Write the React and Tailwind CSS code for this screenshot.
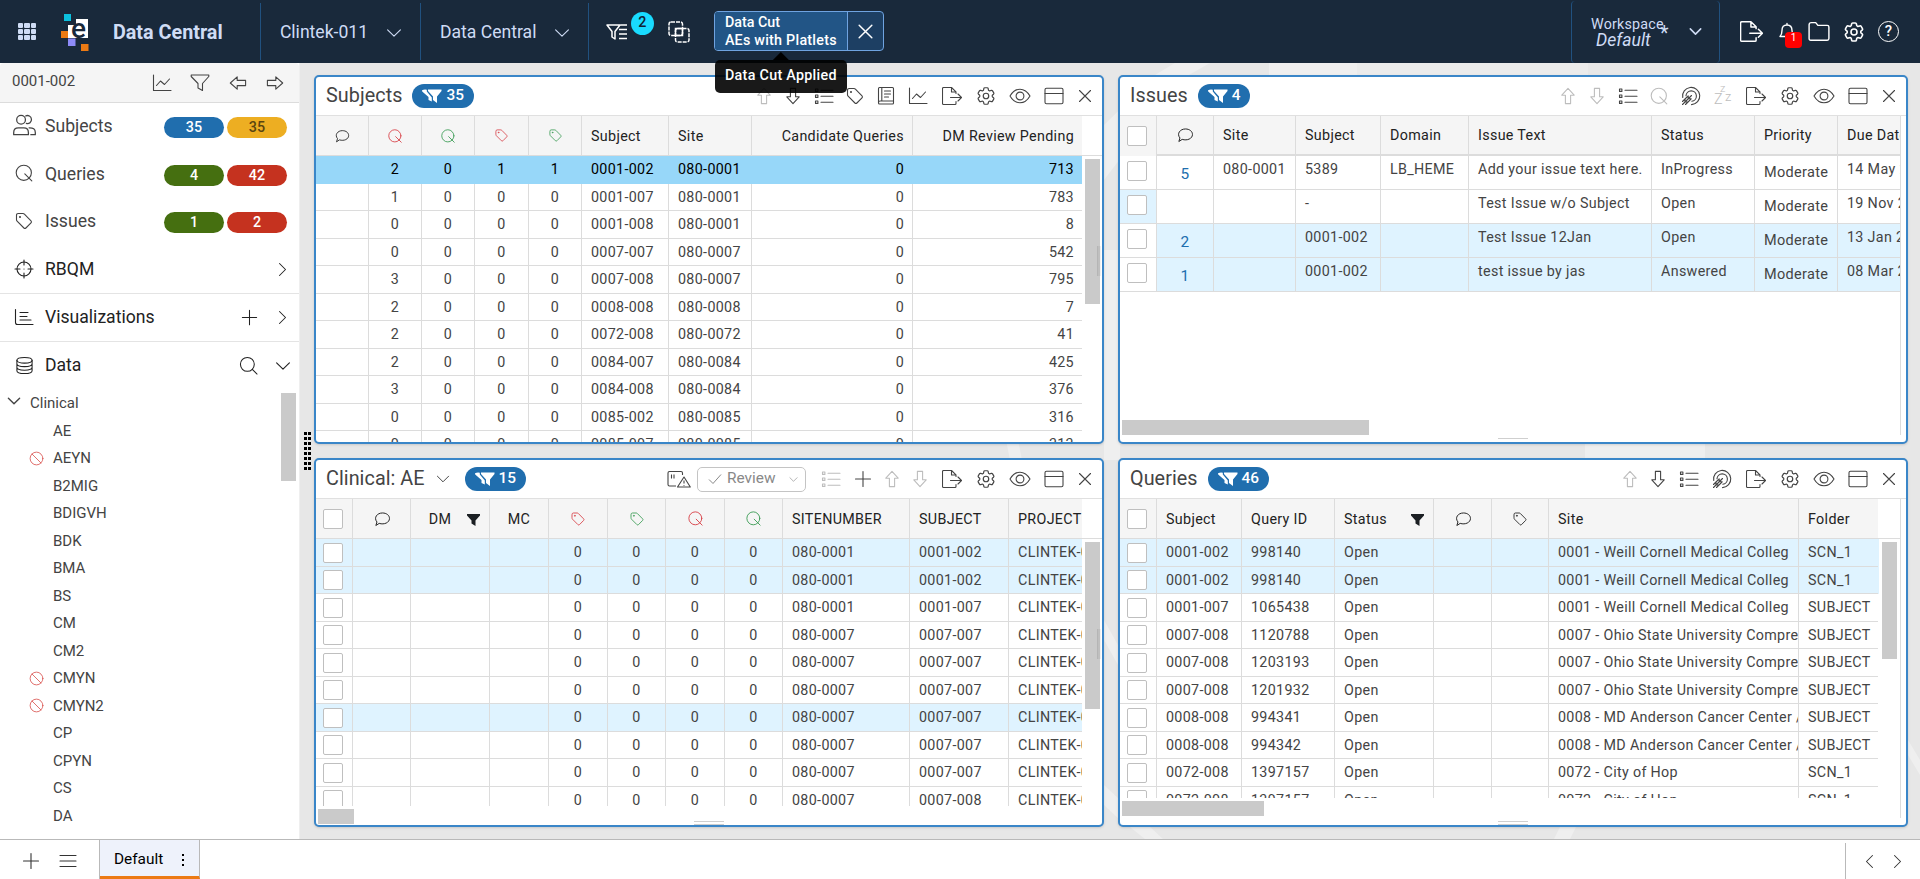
import clsx from "clsx";
import { HiOutlineCog6Tooth } from "react-icons/hi2";

/* ---------- icons ---------- */

function Svg({ size = 20, sw = 1.1, className, children }) {
    return (
        <svg
            width={size}
            height={size}
            viewBox="0 0 20 20"
            fill="none"
            stroke="currentColor"
            strokeWidth={sw}
            strokeLinecap="round"
            strokeLinejoin="round"
            className={clsx("shrink-0", className)}
        >
            {children}
        </svg>
    );
}

const ArrowUp = (p) => (
    <Svg {...p}>
        <path d="M10 2.3 16.2 9.2H12.6V17.6H7.4V9.2H3.8Z" />
    </Svg>
);
const ArrowDown = (p) => <ArrowUp {...p} className="rotate-180" />;
const ArrowLeft = (p) => <ArrowUp {...p} className="-rotate-90" />;
const ArrowRight = (p) => <ArrowUp {...p} className="rotate-90" />;
const List = (p) => (
    <Svg {...p}>
        <path d="M1.5 3h2.4v2.4H1.5zM1.5 9h2.4v2.4H1.5zM1.5 15h2.4v2.4H1.5zM7 4.2h12M7 10.2h12M7 16.2h12" />
    </Svg>
);
const Tag = (p) => (
    <Svg {...p}>
        <path d="M2.5 4.2Q2.5 2.5 4.2 2.5H9Q9.8 2.5 10.4 3.1L17 9.8Q18 10.8 17 11.8L11.9 17Q10.9 18 9.9 17L3.1 10.2Q2.5 9.6 2.5 8.8Z" />
        <circle cx="6" cy="6" r=".5" />
    </Svg>
);
const Book = (p) => (
    <Svg {...p}>
        <rect x="2.5" y="1.5" width="15" height="16.5" rx="1" />
        <path d="M5.8 1.5v13.5M8.5 5h6M8.5 8h6M8.5 11h4M2.5 16.5q0-1.5 1.5-1.5h13.5" />
    </Svg>
);
const Chart = (p) => (
    <Svg {...p}>
        <path d="M1.5 2v15.5h17.5M4.5 12.5 8.5 8l4 3.5 5-5.5" />
    </Svg>
);
const Export = (p) => (
    <Svg {...p}>
        <path d="M14 7.5V5.8L9.5 1.5H1.5Q.5 1.5.5 2.5V17.5Q.5 18.5 1.5 18.5H13Q14 18.5 14 17.5V15.5M9.5 1.5V6H14M8.5 11.5H19.5M16 8 19.5 11.5 16 15" />
    </Svg>
);
const Gear = ({ size = 20, sw = 1.3 }) => (
    <HiOutlineCog6Tooth size={size + 2} strokeWidth={sw} className="shrink-0" />
);
const Eye = (p) => (
    <Svg {...p} className="overflow-visible">
        <path d="M0 10Q4 3.2 10 3.2T20 10Q16 16.8 10 16.8T0 10Z" />
        <circle cx="10" cy="10" r="3.9" />
    </Svg>
);
const Pane = (p) => (
    <Svg {...p}>
        <rect x="1" y="2.2" width="18" height="15.6" rx="1.5" />
        <path d="M1 7.5H19" />
    </Svg>
);
const Close = (p) => (
    <Svg {...p}>
        <path d="M4.5 4.5 15.5 15.5M15.5 4.5 4.5 15.5" />
    </Svg>
);
const Query = (p) => (
    <Svg {...p}>
        <circle cx="9.8" cy="9.8" r="7.6" />
        <path d="M10.8 10.8 17.8 17.8" />
    </Svg>
);
const Target = (p) => (
    <Svg {...p}>
        <path d="M1.7 11.5A8.6 8.6 0 1 1 10.5 18.6M5 9.8A5.2 5.2 0 1 1 10.8 15.2M1.5 18.5 10.5 9.5M4 13V16H7M4 13 7.2 9.8V12.8H10.2L7 16M1.5 15.5 4 13M4.500 18.500 7 16" />
    </Svg>
);
const Snooze = () => (
    <span className="relative block h-5 w-5 shrink-0 font-light leading-none tracking-normal">
        <span className="absolute left-[7px] top-[-3px] text-[11px]">z</span>
        <span className="absolute left-[1px] top-[6px] text-[14.3px]">Z</span>
        <span className="absolute left-[12px] top-[4px] text-[13px]">z</span>
    </span>
);
const Plus = (p) => (
    <Svg {...p}>
        <path d="M10 2.5V17.5M2.5 10H17.5" />
    </Svg>
);
const Comment = (p) => (
    <Svg {...p}>
        <path d="M3.3 16.8 4.4 13.3C.5 8.5 4.5 3.3 10.5 3.3C15 3.3 18.3 5.9 18.3 9.4C18.3 14 12.5 16.6 7.3 15Z" />
    </Svg>
);
const Funnel = (p) => (
    <Svg {...p}>
        <path d="M1.2 2H18.8V3.5L12.5 10.5V17.5L8 15V10.5L1.2 3.5Z" />
    </Svg>
);
const FunnelSolid = () => (
    <svg width="13" height="12" viewBox="0 0 13 12" fill="#1b1f23">
        <path d="M0 0H13V1.5L8.5 6.5V12L4.5 9.5V6.5L0 1.5Z" />
    </svg>
);
const Funnels = () => (
    <svg width="20" height="14" viewBox="0 0 20 14" fill="#fff">
        <path d="M6 .5H19.5V2L15 7.5V14L11 11V7.5L6 2Z" />
        <path d="M0 1.2Q2.5.2 4.8.8V2.5L9.8 8.5V12.5L6.5 11V8L.2 2.5Z" />
    </svg>
);
const Chevron = ({ size = 16, sw = 1.4, className }) => (
    <Svg size={size} sw={sw} className={className}>
        <path d="M2 6 10 14 18 6" />
    </Svg>
);
const People = (p) => (
    <Svg {...p}>
        <circle cx="7" cy="5" r="3.8" />
        <path d="M.6 18v-1.8Q.6 12 4.6 12H9.4Q13.4 12 13.4 16.2V18ZM11 1.7A3.5 3.5 0 1 1 11.6 8.2M14 12Q19.4 11.8 19.4 16V18H15.5" />
    </Svg>
);
const Crosshair = (p) => (
    <Svg {...p}>
        <circle cx="10" cy="10" r="7" />
        <path d="M10 1v5M10 14v5M1 10h5M14 10h5M10 10h.01" />
    </Svg>
);
const Bars = (p) => (
    <Svg {...p}>
        <path d="M1.5 2.5V15.5Q1.5 17.5 3.5 17.5H19M6 5.5h8M6 9.5h7M6 13h11" />
    </Svg>
);
const Database = (p) => (
    <Svg {...p}>
        <ellipse cx="10" cy="4.5" rx="8" ry="3" />
        <path d="M2 4.5V15.5C2 17.3 5.5 18.5 10 18.5S18 17.3 18 15.5V4.5M2 8.2C2 10 5.5 11.2 10 11.2S18 10 18 8.2M2 11.9C2 13.7 5.5 14.9 10 14.9S18 13.7 18 11.9" />
    </Svg>
);
const Search = (p) => (
    <Svg {...p}>
        <circle cx="8.8" cy="8.8" r="7.3" />
        <path d="M14 14 19 19" />
    </Svg>
);
const Ban = (p) => (
    <Svg {...p}>
        <circle cx="10" cy="10" r="8.5" />
        <path d="M4 4 16 16" />
    </Svg>
);
const DataAlert = () => (
    <svg width="24" height="20" viewBox="0 0 24 20" fill="none" stroke="currentColor" strokeWidth="1.1" strokeLinejoin="round">
        <path d="M9 17H2.5Q1 17 1 15.5V4Q1 2.5 2.5 2.5H14Q15.5 2.5 15.5 4V6M4.5 5.5V9.5M7 5.5V9.5M17 8 23.3 18H10.5ZM17 11.5V14.5M17 16V16.8" />
    </svg>
);

/* ---------- header ---------- */

function Logo() {
    return (
        <svg width="29" height="40" viewBox="0 0 29 40" className="ml-6">
            <rect x="4" y="2" width="7" height="7" fill="#0cc0de" />
            <path d="M16 7H28V26H8V13H16Z" fill="#fff" />
            <rect x="1" y="19" width="7" height="7" fill="#ec7a14" />
            <rect x="8" y="26.5" width="7.5" height="7.5" fill="#8e8bf8" />
            <rect x="21" y="32" width="7.5" height="7" fill="#ec7a14" />
            <text x="11" y="25.5" fontSize="28" fontWeight="500" fill="#19293b">
                e
            </text>
        </svg>
    );
}

function HeaderSelect({ label, width }) {
    return (
        <div className={clsx("flex h-[57px] items-center border-l border-[#21517f] pl-[19px] pt-[2px]", width)}>
            <span className="text-[17.6px] text-[#cfdcf5]">{label}</span>
            <Chevron className="ml-[18px] text-[#cfdcf5]" />
        </div>
    );
}

function Header() {
    return (
        <header className="flex h-[63px] items-center bg-[#19293b] text-white">
            <div className="ml-[18px] grid grid-cols-3 gap-px">
                {Array.from({ length: 9 }).map((_, i) => (
                    <span key={i} className="h-[5.3px] w-[5.3px] rounded-[1px] bg-[#cfdcf5]" />
                ))}
            </div>
            <Logo />
            <div className="ml-6 w-[147px] whitespace-nowrap pt-[2px] text-[19.8px] font-bold text-[#cfdcf5]">Data Central</div>
            <HeaderSelect label="Clintek-011" width="w-[160px]" />
            <HeaderSelect label="Data Central" width="w-[168px]" />
            <div className="flex h-[57px] items-center border-l border-[#21517f] pl-[17px]">
                <div className="relative">
                    <svg width="22" height="18" viewBox="0 0 22 18" fill="none" stroke="#fff" strokeWidth="1.5" strokeLinejoin="round">
                        <path d="M1 2H14L9 8.5V16L6 14V8.5ZM14.5 2H21M13 6.5H21M13 11H21M13 15.5H21" />
                    </svg>
                    <span className="absolute left-[25px] top-[-11px] flex h-[23px] w-[23px] items-center justify-center rounded-full bg-[#19dbff] text-[14.3px] font-medium text-[#123]">
                        2
                    </span>
                </div>
                <svg className="ml-10" width="22" height="22" viewBox="0 0 22 22" fill="none" stroke="#fff" strokeWidth="1.5">
                    <rect x="1" y="1" width="13.5" height="13.5" rx="2" strokeDasharray="4 1" />
                    <rect x="7.5" y="7.5" width="13.5" height="13.5" rx="2" strokeDasharray="4 1" />
                    <path d="M7.5 14.5V7.5H14.5V14.5Z" />
                </svg>
            </div>
            <div className="relative ml-6 mt-[-1px] flex h-10 w-[170px] rounded-[4px] border border-[#6fa3e0] bg-[#1d3f63]">
                <div className="flex w-[133px] flex-col justify-center whitespace-nowrap rounded-l-[3px] border-r border-[#6fa3e0] bg-[#225586] pl-[10px] text-[14.3px] font-medium leading-[18px]">
                    <span>Data Cut</span>
                    <span className="tracking-[0.25px]">AEs with Platlets</span>
                </div>
                <div className="flex flex-1 items-center justify-center">
                    <Close size={23} sw={1.3} />
                </div>
                <div className="absolute left-0 top-[40px] z-20 flex w-[132px] flex-col items-center">
                    <div className="h-[8px] w-[16px] bg-black [clip-path:polygon(50%_0,100%_100%,0_100%)]" />
                    <div className="flex h-[33px] w-full items-center justify-center whitespace-nowrap rounded-[5px] bg-black/90 pb-[2px] text-[14.3px] font-medium tracking-[0.3px]">
                        Data Cut Applied
                    </div>
                </div>
            </div>
            <div className="ml-auto flex h-[62px] w-[149px] items-center rounded border-x border-[#21517f] pl-[19px] text-[#cfdcf5]">
                <div className="relative leading-4">
                    <div className="text-[14.3px] tracking-[0.2px]">Workspace</div>
                    <div className="pr-2 text-center text-[17.6px] italic">Default</div>
                    <span className="absolute left-[69px] top-[10px] text-[19.8px]">*</span>
                </div>
                <Chevron size={13} sw={2.4} className="ml-[25px]" />
            </div>
            <div className="ml-[20px] mr-[21px] flex items-center">
                <Export size={23} sw={1.3} />
                <div className="relative ml-[14px]">
                    <Svg size={20} sw={1.4}>
                        <path d="M3 14.5Q5 12.5 5 8.5Q5 3 10 3T15 8.5Q15 12.5 17 14.5ZM10 1.5V3" />
                    </Svg>
                    <span className="absolute left-[8px] top-[10px] flex h-4 w-[17px] items-center justify-center rounded bg-[#f00] pb-[3px] text-[10px] leading-none">
                        1
                    </span>
                </div>
                <Svg size={22} sw={1.3} className="ml-[11px]">
                    <path d="M1 3.5Q1 1.5 3 1.5H7L9 4H17.5Q19 4 19 5.5V16Q19 17.5 17.5 17.5H2.5Q1 17.5 1 16Z" />
                </Svg>
                <div className="ml-[12px]">
                    <Gear size={22} sw={1.6} />
                </div>
                <div className="relative ml-[12px] flex h-[21px] w-[21px] items-center justify-center rounded-full border-[1.5px] border-white text-[15px] font-medium">
                    ?
                </div>
            </div>
        </header>
    );
}

/* ---------- sidebar ---------- */

const menu = [
    { label: "Subjects", icon: <People size={23} />, pills: [["35", "bg-[#206eae] text-white"], ["35", "bg-[#edae22] text-[#5a4410]"]] },
    { label: "Queries", icon: <Query size={20} />, pills: [["4", "bg-[#456f10] text-white"], ["42", "bg-[#c5321f] text-white"]] },
    { label: "Issues", icon: <Tag size={20} />, pills: [["1", "bg-[#456f10] text-white"], ["2", "bg-[#c5321f] text-white"]] },
];

const domains = ["AE", "AEYN", "B2MIG", "BDIGVH", "BDK", "BMA", "BS", "CM", "CM2", "CMYN", "CMYN2", "CP", "CPYN", "CS", "DA"];
const blocked = ["AEYN", "CMYN", "CMYN2"];

function Sidebar() {
    return (
        <aside className="relative flex w-[300px] shrink-0 flex-col overflow-hidden border-r border-[#efefef] bg-white">
            <div className="flex h-[40px] items-center rounded-t border-b border-[#dcdcdc] bg-[#f5f5f5] pl-[12px] pr-[14px] text-[#444]">
                <span className="pb-[3px] text-[15px]">0001-002</span>
                <div className="ml-auto flex items-center">
                    <Chart />
                    <Funnel className="ml-[18px]" />
                    <span className="ml-[18px]"><ArrowLeft /></span>
                    <span className="ml-[17px]"><ArrowRight /></span>
                </div>
            </div>
            <div className="border-b border-[#e4e4e4]">
                {menu.map((m) => (
                    <div key={m.label} className="flex h-[47.5px] items-center pr-[12px] text-[#444]">
                        <div className="flex w-[45px] justify-center pb-[2px] pl-[3px]">{m.icon}</div>
                        <span className="pb-px text-[17.6px]">{m.label}</span>
                        <div className="ml-auto flex gap-[3px] pt-[2px]">
                            {m.pills.map(([n, cls]) => (
                                <span key={cls} className={clsx("flex h-[21px] w-[60px] items-center justify-center rounded-full text-[14.3px] font-medium", cls)}>
                                    {n}
                                </span>
                            ))}
                        </div>
                    </div>
                ))}
                <div className="flex h-[47px] items-center pr-[9px] text-[#222]">
                    <div className="flex w-[45px] justify-center pl-[3px]"><Crosshair /></div>
                    <span className="text-[17.6px]">RBQM</span>
                    <Chevron className="ml-auto -rotate-90" size={15} />
                </div>
            </div>
            <div className="flex h-[48px] items-center border-b border-[#e4e4e4] pr-[9px] text-[#222]">
                <div className="flex w-[45px] justify-center pl-[3px]"><Bars /></div>
                <span className="text-[17.6px]">Visualizations</span>
                <span className="ml-auto"><Plus size={19} /></span>
                <Chevron className="ml-[16px] -rotate-90" size={15} />
            </div>
            <div className="flex h-[48px] items-center pr-[8px] text-[#222]">
                <div className="flex w-[45px] justify-center pl-[3px]"><Database size={19} /></div>
                <span className="text-[17.6px]">Data</span>
                <span className="ml-auto"><Search size={19} /></span>
                <Chevron className="ml-[17px]" size={16} />
            </div>
            <div className="flex text-[15px] text-[#444]">
                <div className="flex-1">
                    <div className="flex h-[27.5px] items-center pl-[7px]">
                        <Chevron size={14} sw={2} className="mb-1" />
                        <span className="ml-[9px]">Clinical</span>
                    </div>
                    {domains.map((d) => (
                        <div key={d} className="flex h-[27.5px] items-center">
                            <div className="w-[53px] pl-[29px] text-[#d9534f]">{blocked.includes(d) && <Ban size={15} />}</div>
                            {d}
                        </div>
                    ))}
                </div>
                <div className="mr-[3px] mt-[3px] h-[88px] w-[15px] bg-[#cacaca]" />
            </div>
        </aside>
    );
}

/* ---------- panels ---------- */

function Toolbar({ items, children }) {
    return (
        <div className="ml-auto flex items-center pr-[6px] text-[#444]">
            {children}
            {items.map(([Icon, gap, faded], i) => (
                <span key={i} className={clsx("flex w-[22px] justify-center", gap, faded && "text-[#bdbdbd]")}>
                    <Icon />
                </span>
            ))}
        </div>
    );
}

const common = [
    [Gear, "ml-[12px]"],
    [Eye, "ml-[12px]"],
    [Pane, "ml-[12px]"],
    [Close, "ml-[9px]"],
];

function Panel({ title, count, chevron, items, extra, children }) {
    return (
        <section className="relative flex flex-col overflow-hidden rounded-[5px] border-2 border-[#3a86c8] bg-white shadow">
            <div className="flex h-[39px] shrink-0 items-center border-b border-[#e0e0e0] pl-[10px]">
                <h2 className="text-[19.8px] tracking-[0.05px] text-[#444]">{title}</h2>
                {chevron && <Chevron className="ml-[11px] text-[#444]" size={14} />}
                <span className={clsx("flex h-6 items-center gap-[4px] rounded-full bg-[#206eae] px-[10px] text-[15.4px] font-medium tracking-normal text-white", chevron ? "ml-[15px]" : "ml-[10px]")}>
                    <Funnels />
                    {count}
                </span>
                <Toolbar items={items}>{extra}</Toolbar>
            </div>
            {children}
        </section>
    );
}

const Check = () => <span className="mr-[2px] block h-5 w-5 rounded-[2px] border border-[#bfbfbf] bg-white" />;

const line = "border-[#dcdcdc]";
const red = "text-[#d8434a]";
const green = "text-[#3f9e58]";

function HeadRow({ cols, width, thick }) {
    return (
        <div className={clsx("flex h-[40px] shrink-0 overflow-hidden whitespace-nowrap bg-[#f5f5f5] text-[#222]", width)}>
            {cols.map((c, i) => (
                <div
                    key={i}
                    className={clsx(
                        "flex shrink-0 items-center",
                        line,
                        c.w,
                        c.align === "center" ? "justify-center" : c.align === "right" ? "justify-end pr-[8px]" : "pl-[9px]",
                        typeof c.head === "string" && "pt-[2px]",
                        i < cols.length - 1 && "border-r",
                        thick ? i > 0 && "border-b-2" : "border-b"
                    )}
                >
                    {c.head}
                </div>
            ))}
        </div>
    );
}

function Row({ cols, cells, className }) {
    return (
        <div className={clsx("flex h-[27.5px] overflow-hidden whitespace-nowrap", className)}>
            {cols.map((c, i) => (
                <div
                    key={i}
                    className={clsx(
                        "flex shrink-0 items-center overflow-hidden border-b border-inherit pt-px",
                        c.w,
                        c.align === "center" ? "justify-center" : c.align === "right" ? "justify-end pr-[8px]" : "pl-[9px]",
                        i < cols.length - 1 && "border-r"
                    )}
                >
                    {cells[i]}
                </div>
            ))}
        </div>
    );
}

const grip = "absolute bottom-0 left-1/2 ml-[-15px] h-[4px] w-[30px] border-y border-[#cfcfcf]";
const sideGrip = "absolute right-[1px] top-[169px] h-[30px] w-[4px] border-l border-[#b5b5b5] bg-black/5";

const subjectCols = [
    { w: "w-[53px]", align: "center", head: <Comment size={16} /> },
    { w: "w-[53px]", align: "center", head: <Query size={16} className={red} /> },
    { w: "w-[53px]", align: "center", head: <Query size={16} className={green} /> },
    { w: "w-[54px]", align: "center", head: <Tag size={15} className={red} /> },
    { w: "w-[53px]", align: "center", head: <Tag size={15} className={green} /> },
    { w: "w-[87px]", head: "Subject" },
    { w: "w-[83px]", head: "Site" },
    { w: "w-[161px]", align: "right", head: "Candidate Queries" },
    { w: "w-[169px]", align: "right", head: "DM Review Pending" },
];
const subjects = [
    ["", 2, 0, 1, 1, "0001-002", "080-0001", 0, 713],
    ["", 1, 0, 0, 0, "0001-007", "080-0001", 0, 783],
    ["", 0, 0, 0, 0, "0001-008", "080-0001", 0, 8],
    ["", 0, 0, 0, 0, "0007-007", "080-0007", 0, 542],
    ["", 3, 0, 0, 0, "0007-008", "080-0007", 0, 795],
    ["", 2, 0, 0, 0, "0008-008", "080-0008", 0, 7],
    ["", 2, 0, 0, 0, "0072-008", "080-0072", 0, 41],
    ["", 2, 0, 0, 0, "0084-007", "080-0084", 0, 425],
    ["", 3, 0, 0, 0, "0084-008", "080-0084", 0, 376],
    ["", 0, 0, 0, 0, "0085-002", "080-0085", 0, 316],
    ["", 0, 0, 0, 0, "0085-007", "080-0085", 0, 313],
];

function SubjectsPanel() {
    const items = [
        [ArrowUp, "", true],
        [ArrowDown, "ml-[7px]"],
        [List, "ml-[9px]"],
        [Tag, "ml-[9px]"],
        [Book, "ml-[9px]"],
        [Chart, "ml-[10px]"],
        [Export, "ml-[12px]"],
        ...common,
    ];
    return (
        <Panel title="Subjects" count={35} items={items}>
            <div className={clsx("shrink-0 border-b", line)}>
                <div className="-mb-px"><HeadRow cols={subjectCols} width="w-[766px]" /></div>
            </div>
            <div className="flex flex-1 overflow-hidden">
                <div className="w-[766px]">
                    {subjects.map((s, i) => (
                        <Row key={i} cols={subjectCols} cells={s} className={i === 0 ? "border-[#97d7f9] bg-[#97d7f9] text-black" : line} />
                    ))}
                </div>
                <div className="ml-[3px] mt-[3px] h-[145px] w-[15px] bg-[#cacaca]" />
            </div>
            <div className={sideGrip} />
        </Panel>
    );
}

const issueCols = [
    { w: "w-[37px]", head: <Check />, align: "center" },
    { w: "w-[57px]", head: <Comment size={18} />, align: "center" },
    { w: "w-[82px]", head: "Site" },
    { w: "w-[85px]", head: "Subject" },
    { w: "w-[88px]", head: "Domain" },
    { w: "w-[183px]", head: "Issue Text" },
    { w: "w-[103px]", head: "Status" },
    { w: "w-[83px]", head: "Priority" },
    { w: "w-[82px]", head: "Due Date" },
];
const issues = [
    ["5", "080-0001", "5389", "LB_HEME", "Add your issue text here.", "InProgress", "Moderate", "14 May 2024"],
    ["", "", "-", "", "Test Issue w/o Subject", "Open", "Moderate", "19 Nov 2024"],
    ["2", "", "0001-002", "", "Test Issue 12Jan", "Open", "Moderate", "13 Jan 2024"],
    ["1", "", "0001-002", "", "test issue by jas", "Answered", "Moderate", "08 Mar 2024"],
];

function IssuesPanel() {
    const items = [
        [ArrowUp, "", true],
        [ArrowDown, "ml-[7px]", true],
        [List, "ml-[9px]"],
        [Query, "ml-[9px]", true],
        [Target, "ml-[10px]"],
        [Snooze, "ml-[10px]", true],
        [Export, "ml-[11px]"],
        ...common,
    ];
    return (
        <Panel title="Issues" count={4} items={items}>
            <div className={clsx("mb-[7px] flex w-[781px] flex-1 flex-col overflow-hidden border-r", line)}>
                <HeadRow cols={issueCols} thick />
                {issues.map((r, i) => (
                    <div key={i} className={clsx("flex h-[34px] shrink-0 whitespace-nowrap", i > 1 && "bg-[#dff3ff]")}>
                        <div className={clsx("flex w-[37px] shrink-0 items-center justify-center border-b border-r pb-1", line, i === 1 ? "bg-[#dff3ff]" : "bg-white")}>
                            <Check />
                        </div>
                        {r.map((v, j) => (
                            <div
                                key={j}
                                className={clsx(
                                    "shrink-0 overflow-hidden border-b leading-5",
                                    line,
                                    issueCols[j + 1].w,
                                    j < 7 && "border-r",
                                    j === 0 && "pt-[8px] text-center text-[15.4px] text-[#206eae]",
                                    j === 6 && "pl-[9px] pt-[7px] text-[14.5px]",
                                    j !== 0 && j !== 6 && "pl-[9px] pt-[3px]"
                                )}
                            >
                                {v}
                            </div>
                        ))}
                    </div>
                ))}
                <div className="ml-[2px] mt-auto h-[15px] w-[247px] shrink-0 bg-[#cacaca]" />
            </div>
            <div className="absolute bottom-[2px] left-1/2 ml-[-15px] h-[2px] w-[30px] border-t border-[#cfcfcf]" />
        </Panel>
    );
}

const aeCols = [
    { w: "w-[37px]", align: "center", head: <Check /> },
    { w: "w-[58px]", align: "center", head: <Comment size={18} /> },
    {
        w: "w-[79px]",
        align: "center",
        head: (
            <span className="flex items-center gap-4 pl-[9px] pt-[2px]">
                DM <FunnelSolid />
            </span>
        ),
    },
    { w: "w-[59px]", align: "center", head: "MC" },
    { w: "w-[59px]", align: "center", head: <Tag size={16} className={red} /> },
    { w: "w-[58px]", align: "center", head: <Tag size={16} className={green} /> },
    { w: "w-[59px]", align: "center", head: <Query size={17} className={red} /> },
    { w: "w-[58px]", align: "center", head: <Query size={17} className={green} /> },
    { w: "w-[127px]", head: "SITENUMBER" },
    { w: "w-[99px]", head: "SUBJECT" },
    { w: "w-[73px]", head: "PROJECT" },
];
const ae = [
    ["080-0001", "0001-002", true],
    ["080-0001", "0001-002", true],
    ["080-0001", "0001-007"],
    ["080-0007", "0007-007"],
    ["080-0007", "0007-007"],
    ["080-0007", "0007-007"],
    ["080-0007", "0007-007", true],
    ["080-0007", "0007-007"],
    ["080-0007", "0007-007"],
    ["080-0007", "0007-008"],
];

function ClinicalPanel() {
    const items = [
        [List, "ml-[14px]", true],
        [Plus, "ml-[10px]"],
        [ArrowUp, "ml-[7px]", true],
        [ArrowDown, "ml-[6px]", true],
        [Export, "ml-[10px]"],
        ...common,
    ];
    const extra = (
        <>
            <DataAlert />
            <div className="ml-[6px] flex h-[25px] w-[109px] items-center rounded-[5px] border border-[#c4c4c4] pl-[10px] text-[15.4px] text-[#888]">
                <svg width="14" height="12" viewBox="0 0 14 12" fill="none" stroke="currentColor">
                    <path d="M1 6.5 5 10.5 13 1.5" />
                </svg>
                <span className="ml-[5px] tracking-normal">Review</span>
                <Chevron size={9} className="ml-auto mr-[7px]" />
            </div>
        </>
    );
    return (
        <Panel title="Clinical: AE" chevron count={15} items={items} extra={extra}>
            <div className={clsx("shrink-0 border-b", line)}>
                <div className="-mb-px"><HeadRow cols={aeCols} width="w-[766px]" /></div>
            </div>
            <div className="flex h-[267px] overflow-hidden">
                <div className="w-[766px]">
                    {ae.map(([site, subject, hl], i) => (
                        <Row
                            key={i}
                            cols={aeCols}
                            cells={[<Check />, "", "", "", 0, 0, 0, 0, site, subject, "CLINTEK-011"]}
                            className={clsx(line, hl && "bg-[#dff3ff]")}
                        />
                    ))}
                </div>
                <div className="ml-[3px] mt-[3px] h-[167px] w-[15px] bg-[#cacaca]" />
            </div>
            <div className="ml-[2px] mt-[3px] h-[15px] w-[36px] bg-[#cacaca]" />
            <div className={sideGrip} />
            <div className={grip} />
        </Panel>
    );
}

const queryCols = [
    { w: "w-[37px]", align: "center", head: <Check /> },
    { w: "w-[85px]", head: "Subject" },
    { w: "w-[93px]", head: "Query ID" },
    {
        w: "w-[99px]",
        head: (
            <span className="flex w-full items-center justify-between pr-[9px] pt-[2px]">
                Status <FunnelSolid />
            </span>
        ),
    },
    { w: "w-[58px]", align: "center", head: <Comment size={18} /> },
    { w: "w-[57px]", align: "center", head: <Tag size={16} /> },
    { w: "w-[250px]", head: "Site" },
    { w: "w-[79px]", head: "Folder" },
];
const weill = "0001 - Weill Cornell Medical Colleg";
const ohio = "0007 - Ohio State University Comprehensive";
const anderson = "0008 - MD Anderson Cancer Center / Houston";
const hope = "0072 - City of Hop";
const queries = [
    ["0001-002", "998140", weill, "SCN_1", true],
    ["0001-002", "998140", weill, "SCN_1", true],
    ["0001-007", "1065438", weill, "SUBJECT"],
    ["0007-008", "1120788", ohio, "SUBJECT"],
    ["0007-008", "1203193", ohio, "SUBJECT"],
    ["0007-008", "1201932", ohio, "SUBJECT"],
    ["0008-008", "994341", anderson, "SUBJECT"],
    ["0008-008", "994342", anderson, "SUBJECT"],
    ["0072-008", "1397157", hope, "SCN_1"],
    ["0072-008", "1397157", hope, "SCN_1"],
];

function QueriesPanel() {
    const items = [
        [ArrowUp, "", true],
        [ArrowDown, "ml-[6px]"],
        [List, "ml-[9px]"],
        [Target, "ml-[11px]"],
        [Export, "ml-[12px]"],
        ...common,
    ];
    return (
        <Panel title="Queries" count={46} items={items}>
            <div className={clsx("mb-[7px] w-[781px] flex-1 border-r", line)}>
                <div className={clsx("border-b", line)}>
                    <div className="-mb-px"><HeadRow cols={queryCols} width="w-[758px]" /></div>
                </div>
                <div className="flex h-[259px] overflow-hidden">
                    <div className="w-[759px]">
                        {queries.map(([subject, id, site, folder, hl], i) => (
                            <Row
                                key={i}
                                cols={queryCols}
                                cells={[<Check />, subject, id, "Open", "", "", <span className="w-full overflow-hidden">{site}</span>, folder]}
                                className={clsx(line, hl && "bg-[#dff3ff]")}
                            />
                        ))}
                    </div>
                    <div className="ml-[3px] mt-[3px] h-[117px] w-[15px] bg-[#cacaca]" />
                </div>
                <div className="ml-[2px] mt-[3px] h-[15px] w-[142px] bg-[#cacaca]" />
            </div>
            <div className={grip} />
        </Panel>
    );
}

/* ---------- footer ---------- */

function Footer() {
    return (
        <footer className="flex h-10 items-stretch border-t border-[#b9b9b9] bg-white text-[#333]">
            <div className="flex w-[100px] items-center gap-[17px] pl-[21px] pt-[2px]">
                <Plus size={20} />
                <Svg size={20}>
                    <path d="M2 4.5H18M2 10H18M2 15.5H18" />
                </Svg>
            </div>
            <div className="flex w-[100px] items-center border-b-[3px] border-r border-b-[#ec7a14] border-r-[#b9b9b9] bg-[#eef2fb] pl-[14px] pt-[4px] text-[15.4px] text-black shadow-[-1px_0_0_#b9b9b9]">
                Default
                <span className="ml-[19px] flex flex-col gap-[3px]">
                    <i className="h-[2px] w-[2px] bg-black" />
                    <i className="h-[2px] w-[2px] bg-black" />
                    <i className="h-[2px] w-[2px] bg-black" />
                </span>
            </div>
            <div className="ml-auto mt-[3px] flex w-[75px] items-center gap-[13px] border-l border-[#b9b9b9] pl-[16px]">
                <Chevron size={15} className="rotate-90" />
                <Chevron size={15} className="-rotate-90" />
            </div>
        </footer>
    );
}

export default function App() {
    return (
        <div className="flex h-[879px] w-[1920px] flex-col overflow-hidden bg-[#e7e7e7] font-['Roboto',sans-serif] text-[14.3px]">
            <Header />
            <div className="relative flex flex-1 overflow-hidden">
                <svg className="absolute left-0 top-0" width="1920" height="776" viewBox="0 63 1920 776" fill="#efefef">
                    <path d="M1155 75 1175 63H1210L1180 80 1104 180V125ZM1269 63H1357V80H1269Z" />
                    <path d="M1357 63H1588V80H1357Z" fill="#ebebeb" />
                    <path d="M1585 440H1705V460H1585ZM1006 440H1018L1022 460H1010ZM1104 250H1120V460H1104ZM1104 620 1118 645V665L1104 640ZM1104 785 1120 800V820L1104 805ZM1130 827H1150L1163 839H1145ZM1560 827H1576L1570 839H1554Z" />
                    <path d="M1908 740 1920 760V775L1908 755Z" />
                </svg>
                <Sidebar />
                <div className="relative flex w-[14px] items-center justify-center">
                    <div className="grid grid-cols-2 gap-x-[1px] gap-y-[2px]">
                        {Array.from({ length: 16 }).map((_, i) => (
                            <i key={i} className="h-[3px] w-[3px] bg-black" />
                        ))}
                    </div>
                </div>
                <main className="relative grid grid-cols-[790px_790px] grid-rows-[369px_369px] gap-[14px] pt-3 tracking-[0.33px] text-[#444]">
                    <SubjectsPanel />
                    <IssuesPanel />
                    <ClinicalPanel />
                    <QueriesPanel />
                </main>
            </div>
            <Footer />
        </div>
    );
}
